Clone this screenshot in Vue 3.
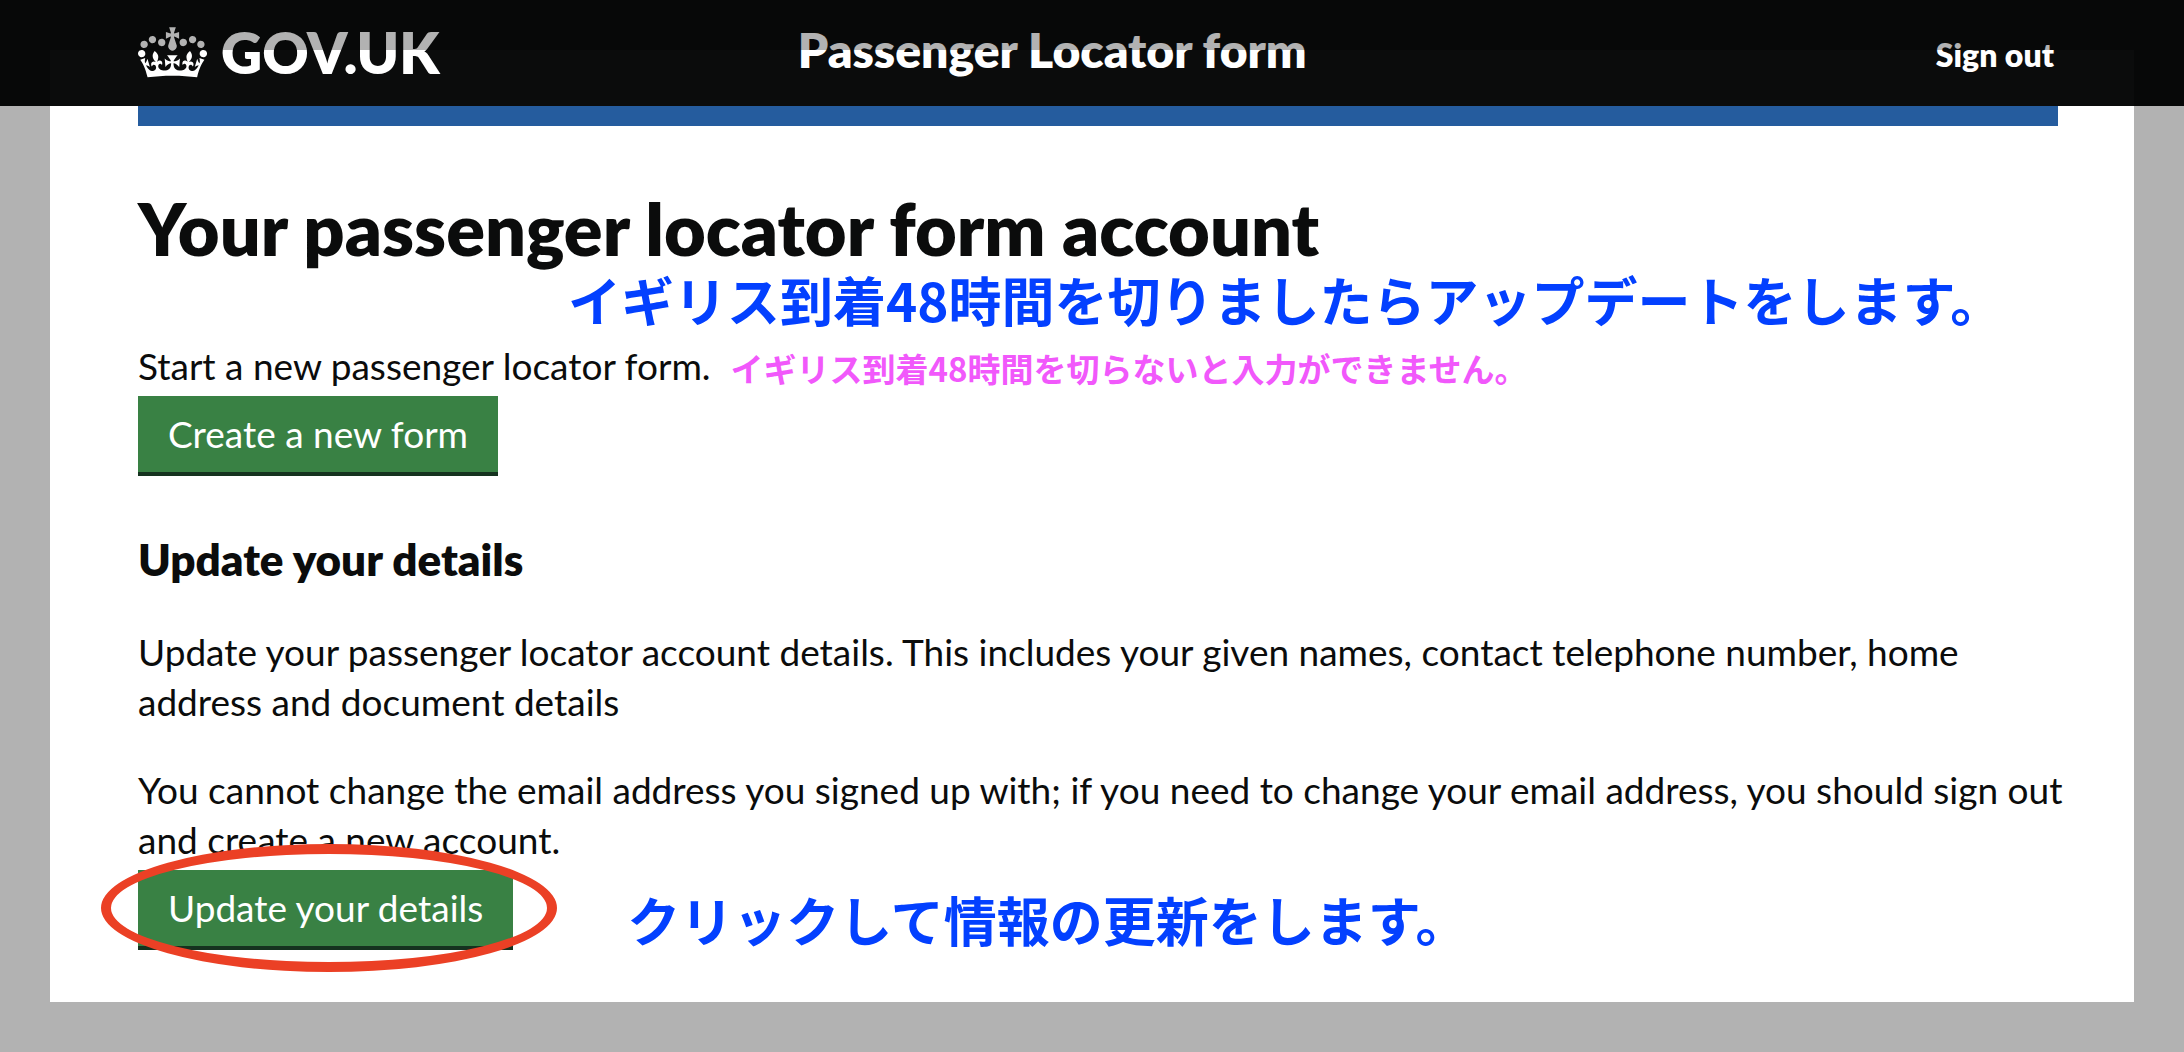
<script setup>
const signOutHref = '#sign-out'
</script>

<template>
  <div class="page">
    <header class="header">
      <a class="logo" href="#home">
        <svg class="crown" viewBox="0 0 132 97" aria-hidden="true" focusable="false">
          <path fill="currentColor" fill-rule="evenodd" d="M25 30.2c3.5 1.5 7.7-.2 9.1-3.7 1.5-3.6-.2-7.8-3.9-9.2-3.6-1.4-7.6.3-9.1 3.9-1.4 3.5.3 7.5 3.9 9zM9 39.5c3.6 1.5 7.8-.2 9.2-3.7 1.5-3.6-.2-7.8-3.9-9.1-3.6-1.5-7.6.2-9.1 3.8-1.4 3.5.3 7.5 3.8 9zM4.4 57.2c3.5 1.5 7.7-.2 9.1-3.8 1.5-3.6-.2-7.7-3.9-9.1-3.5-1.5-7.6.3-9.1 3.8-1.4 3.5.3 7.6 3.9 9.1zm38.3-21.4c3.5 1.5 7.7-.2 9.1-3.8 1.5-3.6-.2-7.7-3.9-9.1-3.6-1.5-7.6.3-9.1 3.8-1.3 3.6.4 7.7 3.9 9.1zm64.4-5.6c-3.6 1.5-7.8-.2-9.1-3.7-1.5-3.6.2-7.8 3.8-9.2 3.6-1.4 7.7.3 9.2 3.9 1.3 3.5-.4 7.5-3.9 9zm15.9 9.3c-3.6 1.5-7.7-.2-9.1-3.7-1.5-3.6.2-7.8 3.7-9.1 3.6-1.5 7.7.2 9.2 3.8 1.5 3.5-.3 7.5-3.8 9zm4.7 17.7c-3.6 1.5-7.8-.2-9.2-3.8-1.5-3.6.2-7.7 3.9-9.1 3.6-1.5 7.7.3 9.2 3.8 1.3 3.5-.4 7.6-3.9 9.1zM89.3 35.8c-3.6 1.5-7.8-.2-9.2-3.8-1.4-3.6.2-7.7 3.9-9.1 3.6-1.5 7.7.3 9.2 3.8 1.4 3.6-.3 7.7-3.9 9.1zM69.7 17.7l8.9 4.7V9.3l-8.9 2.8c-.2-.3-.5-.6-.9-.9L72.4 0H59.6l3.5 11.2c-.3.3-.6.5-.9.9l-8.8-2.8v13.1l8.8-4.7c.3.3.6.7.9.9l-5 15.4v.1c-.2.8-.4 1.6-.4 2.4 0 4.1 3.1 7.5 7 8.1h.2c.3 0 .7.1 1 .1.4 0 .7 0 1-.1h.2c4-.6 7.1-4.1 7.1-8.1 0-.8-.1-1.7-.4-2.4V34l-5.1-15.4c.4-.2.7-.6 1-.9zM66 92.8c16.9 0 32.8 1.1 47.1 3.2 4-16.9 8.9-26.7 14-33.5l-9.6-3.4c1 4.9 1.1 7.2 0 10.2-1.5-1.4-3-4.3-4.2-8.7L108.6 76c2.8-2 5-3.2 7.5-3.3-4.4 9.4-10 11.9-13.6 11.2-4.3-.8-6.3-4.6-5.6-7.9 1-4.7 5.7-5.9 8-.5 4.3-8.7-3-11.4-7.6-8.8 7.1-7.2 7.9-13.5 2.1-21.1-8 6.1-8.1 12.3-4.5 20.8-4.7-5.4-12.1-2.5-9.5 6.2 3.4-5.2 7.9-2 7.2 3.1-.6 4.3-6.4 7.8-13.5 7.2-10.3-.9-10.9-8-11.2-13.8 2.5-.5 7.1 1.8 11 7.3L80.2 60c-4.1 4.4-8 5.3-12.3 5.4 1.4-4.4 8-11.6 8-11.6H55.5s6.4 7.2 7.9 11.6c-4.2-.1-8-1-12.3-5.4l1.4 16.4c3.9-5.5 8.5-7.7 10.9-7.3-.3 5.8-.9 12.8-11.1 13.8-7.2.6-12.9-2.9-13.5-7.2-.7-5 3.8-8.3 7.1-3.1 2.7-8.7-4.6-11.6-9.4-6.2 3.7-8.5 3.6-14.7-4.6-20.8-5.8 7.6-5 13.9 2.2 21.1-4.7-2.6-11.9.1-7.7 8.8 2.3-5.5 7.1-4.2 8.1.5.7 3.3-1.3 7.1-5.7 7.9-3.5.7-9-1.8-13.5-11.2 2.5.1 4.7 1.3 7.5 3.3l-4.7-15.4c-1.2 4.4-2.7 7.2-4.3 8.7-1.1-3-.9-5.3 0-10.2l-9.5 3.4c5 6.9 9.9 16.7 14 33.5 14.8-2.1 30.8-3.2 47.7-3.2z" />
        </svg>
        <span>GOV.UK</span>
      </a>
      <a class="service" href="#service">Passenger Locator form</a>
      <a class="sign-out" :href="signOutHref">Sign out</a>
    </header>

    <main class="content">
      <div class="bar"></div>

      <h1>Your passenger locator form account</h1>
      <p class="note note-top" lang="ja">イギリス到着48時間を切りましたらアップデートをします。</p>
      <div class="start">
        <p>Start a new passenger locator form.</p>
        <p class="note note-small" lang="ja">イギリス到着48時間を切らないと入力ができません。</p>
      </div>
      <button class="button" type="button">Create a new form</button>

      <h2>Update your details</h2>
      <p class="prose">
        Update your passenger locator account details. This includes your given names, contact telephone number, home address and document details
      </p>
      <p class="prose">
        You cannot change the email address you signed up with; if you need to change your email address, you should sign out and create a new account.
      </p>
      <div class="update">
        <div class="circled">
          <button class="button" type="button">Update your details</button>
          <span class="ring" aria-hidden="true"></span>
        </div>
        <p class="note" lang="ja">クリックして情報の更新をします。</p>
      </div>
    </main>

    <div class="shade" aria-hidden="true"></div>
  </div>
</template>

<style>
body {
  margin: 0;
  background: #fff;
}
</style>

<style scoped>
.page {
  position: relative;
  min-height: 100vh;
  color: #0b0c0c;
  font-family: Lato, "Noto Sans", sans-serif;
  font-size: 37px;
  line-height: 50px;
}

.header,
.content {
  padding: 0 126px 0 138px;
}

.header {
  display: grid;
  grid-template-columns: 34% auto 1fr;
  align-items: center;
  min-height: 106px;
  background: #0b0c0c;
  color: #fff;
  font-weight: 800;
}

.header a {
  color: inherit;
  text-decoration: none;
}

.logo {
  display: flex;
  align-items: center;
  gap: 14px;
  padding-bottom: 2px;
  font-size: 57px;
}

.crown {
  width: 69px;
  height: 51px;
}

.service {
  padding: 0 0 6px 7px;
  font-size: 48px;
}

.sign-out {
  justify-self: end;
  padding: 4px 4px 0 0;
  font-size: 32px;
}

.bar {
  height: 20px;
  background: #255c9e;
}

h1,
h2,
p {
  margin: 0;
}

h1 {
  margin-top: 62px;
  font-size: 72px;
  font-weight: 800;
  line-height: 80px;
}

h2 {
  margin: 58px 0 43px;
  font-size: 44px;
  font-weight: 800;
}

.start {
  display: flex;
  align-items: flex-end;
  gap: 20px;
  margin: 11px 0 5px;
}

.prose {
  margin: 0 -12px 38px 0;
}

.prose + .prose {
  margin-bottom: 5px;
}

.button {
  display: block;
  height: 80px;
  padding: 0 30px;
  border: 0;
  border-bottom: 4px solid #15321f;
  background: #398144;
  color: #fff;
  font: inherit;
}

.note {
  color: #0340ff;
  font-family: "Noto Sans CJK JP", sans-serif;
  font-size: 53px;
  font-weight: 700;
  line-height: 62px;
}

.note-top {
  margin-left: 430px;
}

.note-small {
  color: #f158fb;
  font-size: 33px;
  line-height: 46px;
}

.update {
  display: flex;
  align-items: flex-end;
  gap: 114px;
  padding-bottom: 102px;
}

.circled {
  position: relative;
}

.ring {
  position: absolute;
  inset: -26px -44px -22px -37px;
  border: 10px solid #eb4025;
  border-radius: 50%;
  pointer-events: none;
}

/* Dimmed frame round the highlighted area */
.shade {
  position: absolute;
  inset: 0;
  border: 50px solid rgba(0, 0, 0, 0.3);
  pointer-events: none;
}
</style>
